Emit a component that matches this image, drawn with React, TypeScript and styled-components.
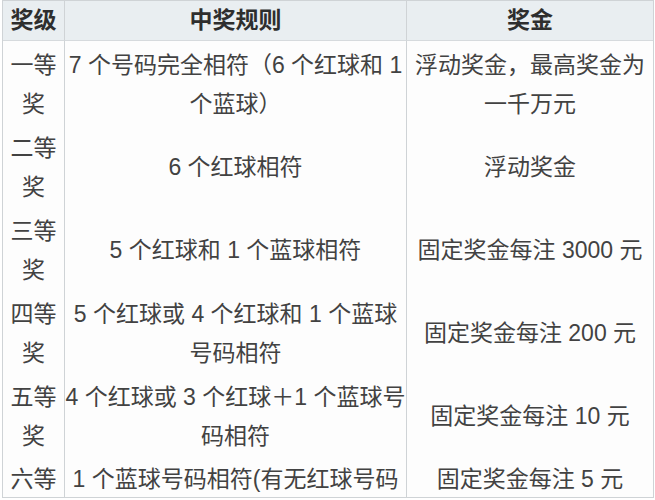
import React from "react";
import styled, { createGlobalStyle } from "styled-components";

const Global = createGlobalStyle`
  html, body { margin: 0; padding: 0; background: #ffffff; }
  body { font-family: "Liberation Sans", "Noto Sans CJK SC", sans-serif; }
`;

const Frame = styled.div`
  width: 652px;
  height: 498px;
  margin-left: 2px;
  box-sizing: border-box;
  border: 1px solid #cfd3d6;
  overflow: hidden;
  background: #fdfdfd;
`;

const Grid = styled.div`
  display: grid;
  grid-template-columns: 61px 342px 1fr;
`;

const Cell = styled.div<{ $head?: boolean; $first?: boolean; $top?: boolean }>`
  box-sizing: border-box;
  display: flex;
  flex-direction: column;
  justify-content: ${(p) => (p.$top ? "flex-start" : "center")};
  align-items: center;
  text-align: center;
  padding: ${(p) => (p.$head ? "0 4px" : "4px 4px 0")};
  height: ${(p) => (p.$head ? "40px" : p.$top ? "41px" : "83px")};
  border-left: ${(p) => (p.$first ? "none" : "1px solid #cfd3d6")};
  border-bottom: ${(p) => (p.$head ? "1px solid #d6dadd" : "none")};
  background: ${(p) => (p.$head ? "#e9eef1" : "transparent")};
  color: ${(p) => (p.$head ? "#2e2e2e" : "#424242")};
  font-size: 23px;
  font-weight: ${(p) => (p.$head ? 700 : 400)};
  line-height: 39px;
`;

const Line = styled.span`
  display: block;
  white-space: nowrap;
`;

type Row = { level: string[]; rule: string[]; prize: string[]; top?: boolean };

const rows: Row[] = [
  {
    level: ["一等", "奖"],
    rule: ["7 个号码完全相符（6 个红球和 1", "个蓝球）"],
    prize: ["浮动奖金，最高奖金为", "一千万元"],
  },
  { level: ["二等", "奖"], rule: ["6 个红球相符"], prize: ["浮动奖金"] },
  { level: ["三等", "奖"], rule: ["5 个红球和 1 个蓝球相符"], prize: ["固定奖金每注 3000 元"] },
  {
    level: ["四等", "奖"],
    rule: ["5 个红球或 4 个红球和 1 个蓝球", "号码相符"],
    prize: ["固定奖金每注 200 元"],
  },
  {
    level: ["五等", "奖"],
    rule: ["4 个红球或 3 个红球＋1 个蓝球号", "码相符"],
    prize: ["固定奖金每注 10 元"],
  },
  {
    level: ["六等"],
    rule: ["1 个蓝球号码相符(有无红球号码"],
    prize: ["固定奖金每注 5 元"],
    top: true,
  },
];

const Lines = ({ items }: { items: string[] }) => (
  <>
    {items.map((t, i) => (
      <Line key={i}>{t}</Line>
    ))}
  </>
);

export default function App() {
  return (
    <>
      <Global />
      <Frame>
        <Grid>
          <Cell $head $first>奖级</Cell>
          <Cell $head>中奖规则</Cell>
          <Cell $head>奖金</Cell>
          {rows.map((r, i) => (
            <React.Fragment key={i}>
              <Cell $first $top={r.top}>
                <Lines items={r.level} />
              </Cell>
              <Cell $top={r.top}>
                <Lines items={r.rule} />
              </Cell>
              <Cell $top={r.top}>
                <Lines items={r.prize} />
              </Cell>
            </React.Fragment>
          ))}
        </Grid>
      </Frame>
    </>
  );
}
